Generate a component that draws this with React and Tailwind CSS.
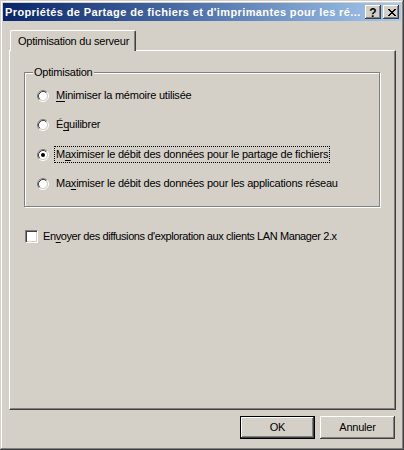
import React from "react";

const font = "font-['Tahoma','Liberation_Sans',Arial,sans-serif]";

const Radio = ({ checked }) => (
  <svg width="12" height="12" viewBox="0 0 12 12" className="shrink-0">
    <circle cx="6" cy="6" r="4.2" fill="#fff" />
    <path d="M2.11 9.89A5.5 5.5 0 0 1 9.89 2.11" fill="none" stroke="#808080" />
    <path d="M9.89 2.11A5.5 5.5 0 0 1 2.11 9.89" fill="none" stroke="#fff" />
    <path d="M2.82 9.18A4.5 4.5 0 0 1 9.18 2.82" fill="none" stroke="#404040" />
    <path d="M9.18 2.82A4.5 4.5 0 0 1 2.82 9.18" fill="none" stroke="#d4d0c8" />
    {checked && <circle cx="6" cy="6" r="2" fill="#000" />}
  </svg>
);

const CloseGlyph = () => {
  const rows = ["xx....xx", ".xx..xx.", "..xxxx..", "...xx...", "..xxxx..", ".xx..xx.", "xx....xx"];
  return (
    <svg width="8" height="7" viewBox="0 0 8 7" shapeRendering="crispEdges">
      {rows.flatMap((r, y) =>
        r.split("").map((c, x) => (c === "x" ? <rect key={`${x}-${y}`} x={x} y={y} width="1" height="1" fill="#000" /> : null))
      )}
    </svg>
  );
};

const raised = "shadow-[inset_-1px_-1px_0_#404040,inset_1px_1px_0_#ffffff,inset_-2px_-2px_0_#808080,inset_2px_2px_0_#d4d0c8]";

const Key = ({ children }) => <span className="underline underline-offset-[2px]">{children}</span>;

const options = [
  { label: <><Key>M</Key>inimiser la mémoire utilisée</>, mt: "mt-[14px]" },
  { label: <>É<Key>q</Key>uilibrer</>, mt: "mt-[12px]" },
  { label: <>M<Key>a</Key>ximiser le débit des données pour le partage de fichiers</>, mt: "mt-[13px]", checked: true },
  { label: <>Ma<Key>x</Key>imiser le débit des données pour les applications réseau</>, mt: "mt-[12px]" },
];

export default function App() {
  return (
    <div className={`w-[404px] h-[450px] bg-[#d4d0c8] p-[3px] flex flex-col text-[11px] tracking-[-0.22px] text-black ${font} shadow-[inset_-1px_-1px_0_#404040,inset_1px_1px_0_#d4d0c8,inset_-2px_-2px_0_#808080,inset_2px_2px_0_#ffffff]`}>
      {/* title bar */}
      <div className="h-[18px] flex items-center bg-linear-to-r from-[#0a246a] to-[#a6caf0]">
        <div className="flex-1 pl-[2px] text-white font-bold tracking-[0.38px] whitespace-nowrap overflow-hidden leading-none">
          Propriétés de Partage de fichiers et d'imprimantes pour les ré...
        </div>
        <div className="flex gap-[2px] mr-[2px] tracking-normal">
          <div className={`w-[16px] h-[14px] bg-[#d4d0c8] flex items-center justify-center font-bold text-[12px] leading-none pt-[1px] ${raised}`}>?</div>
          <div className={`w-[16px] h-[14px] bg-[#d4d0c8] flex items-center justify-center pl-[1px] ${raised}`}>
            <CloseGlyph />
          </div>
        </div>
      </div>

      {/* tab control */}
      <div className="mt-[9px] ml-[6px] w-[387px] flex flex-col">
        <div className="self-start ml-[1px] h-[21px] -mb-[1px] relative z-10 bg-[#d4d0c8] pl-[7px] pr-[6px] flex items-center border-t border-l border-white rounded-tl-[2px] rounded-tr-[2px] shadow-[inset_-1px_0_0_#808080] border-r border-r-[#404040]">
          Optimisation du serveur
        </div>
        <div className="h-[360px] border-t border-l border-white border-r border-b border-r-[#404040] border-b-[#404040] shadow-[inset_-1px_-1px_0_#808080] flex flex-col">
          {/* group box */}
          <div className="relative mt-[21px] ml-[14px] w-[356px] h-[135px] border border-[#808080] shadow-[inset_1px_1px_0_#ffffff,1px_1px_0_#ffffff] flex flex-col">
            <div className="absolute -top-[7px] left-[8px] px-[1px] bg-[#d4d0c8] leading-[13px]">Optimisation</div>
            {options.map((o, i) => (
              <div key={i} className={`flex items-center h-[17px] ml-[12px] ${o.mt}`}>
                <Radio checked={o.checked} />
                <span className={`ml-[5px] px-[1px] leading-[15px] whitespace-nowrap border border-dotted ${o.checked ? "border-black" : "border-transparent"}`}>
                  {o.label}
                </span>
              </div>
            ))}
          </div>

          {/* checkbox */}
          <div className="flex items-center ml-[15px] mt-[23px] h-[13px]">
            <div className="w-[13px] h-[13px] shrink-0 bg-white border border-t-[#808080] border-l-[#808080] border-b-white border-r-white shadow-[inset_1px_1px_0_#404040,inset_-1px_-1px_0_#d4d0c8]" />
            <span className="ml-[5px] whitespace-nowrap tracking-[-0.4px]">
              En<Key>v</Key>oyer des diffusions d'exploration aux clients LAN Manager 2.x
            </span>
          </div>
        </div>
      </div>

      {/* buttons */}
      <div className="flex justify-end gap-[5px] mt-[6px] mr-[6px]">
        <div className="w-[75px] h-[23px] border border-black">
          <div className={`w-full h-full bg-[#d4d0c8] flex items-center justify-center ${raised}`}>OK</div>
        </div>
        <div className={`w-[75px] h-[23px] bg-[#d4d0c8] flex items-center justify-center ${raised}`}>Annuler</div>
      </div>
    </div>
  );
}
